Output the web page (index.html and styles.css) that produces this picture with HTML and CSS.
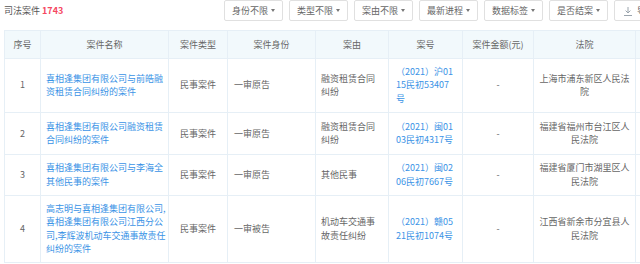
FILE: index.html
```html
<!DOCTYPE html>
<html lang="zh-CN">
<head>
    <meta charset="UTF-8">
    <meta name="viewport" content="width=device-width, initial-scale=1.0">
    <title>司法案件</title>
    <link rel="stylesheet" href="styles.css">
</head>
<body>
    <div class="page">
        <div class="toolbar">
            <div class="title">司法案件 <span class="count">1743</span></div>
            <div class="filters">
                <button class="filter">身份不限<i class="caret"></i></button>
                <button class="filter">类型不限<i class="caret"></i></button>
                <button class="filter">案由不限<i class="caret"></i></button>
                <button class="filter">最新进程<i class="caret"></i></button>
                <button class="filter">数据标签<i class="caret"></i></button>
                <button class="filter">是否结案<i class="caret"></i></button>
                <button class="filter export">
                    <svg width="10" height="10" viewBox="0 0 10 10">
                        <path d="M5 1V7M2.6 4.6L5 7L7.4 4.6M1 9.5H9" fill="none" stroke="#9aa4ad" stroke-width="1"/>
                    </svg>
                    导出
                </button>
            </div>
        </div>

        <table class="case-table">
            <colgroup>
                <col style="width:36px">
                <col style="width:128px">
                <col style="width:59px">
                <col style="width:88px">
                <col style="width:73px">
                <col style="width:74px">
                <col style="width:71px">
                <col style="width:102px">
                <col style="width:80px">
            </colgroup>
            <thead>
                <tr>
                    <th>序号</th>
                    <th>案件名称</th>
                    <th>案件类型</th>
                    <th>案件身份</th>
                    <th>案由</th>
                    <th>案号</th>
                    <th>案件金额(元)</th>
                    <th>法院</th>
                    <th></th>
                </tr>
            </thead>
            <tbody>
                <tr>
                    <td class="center">1</td>
                    <td class="name"><a href="#">喜相逢集团有限公司与前皓融资租赁合同纠纷的案件</a></td>
                    <td class="center">民事案件</td>
                    <td>一审原告</td>
                    <td class="reason">融资租赁合同纠纷</td>
                    <td class="case-no"><a href="#">（2021）沪0115民初53407号</a></td>
                    <td class="center">-</td>
                    <td class="court">上海市浦东新区人民法院</td>
                    <td></td>
                </tr>
                <tr class="tall">
                    <td class="center">2</td>
                    <td class="name"><a href="#">喜相逢集团有限公司融资租赁合同纠纷的案件</a></td>
                    <td class="center">民事案件</td>
                    <td>一审原告</td>
                    <td class="reason">融资租赁合同纠纷</td>
                    <td class="case-no"><a href="#">（2021）闽0103民初4317号</a></td>
                    <td class="center">-</td>
                    <td class="court">福建省福州市台江区人民法院</td>
                    <td></td>
                </tr>
                <tr>
                    <td class="center">3</td>
                    <td class="name"><a href="#">喜相逢集团有限公司与李海全其他民事的案件</a></td>
                    <td class="center">民事案件</td>
                    <td>一审原告</td>
                    <td class="reason">其他民事</td>
                    <td class="case-no"><a href="#">（2021）闽0206民初7667号</a></td>
                    <td class="center">-</td>
                    <td class="court">福建省厦门市湖里区人民法院</td>
                    <td></td>
                </tr>
                <tr>
                    <td class="center">4</td>
                    <td class="name"><a href="#">高志明与喜相逢集团有限公司,喜相逢集团有限公司江西分公司,李辉波机动车交通事故责任纠纷的案件</a></td>
                    <td class="center">民事案件</td>
                    <td>一审被告</td>
                    <td class="reason">机动车交通事故责任纠纷</td>
                    <td class="case-no"><a href="#">（2021）赣0521民初1074号</a></td>
                    <td class="center">-</td>
                    <td class="court">江西省新余市分宜县人民法院</td>
                    <td></td>
                </tr>
            </tbody>
        </table>
    </div>
</body>
</html>
```

FILE: styles.css
```css
html, body {
    margin: 0;
    padding: 0;
    overflow: hidden;
}
body {
    font-family: "Noto Sans CJK SC", "Noto Sans", sans-serif;
    font-size: 9px;
    color: #666;
    background-color: #fff;
}
.page {
    width: 720px;
    padding-left: 4px;
}
.toolbar {
    display: flex;
    align-items: center;
    height: 21px;
}
.title {
    width: 220px;
    color: #555;
}
.count {
    color: #f5485f;
    font-weight: bold;
}
.filters {
    display: flex;
    gap: 6px;
}
.filter {
    width: 59px;
    height: 21px;
    padding: 0;
    border: 1px solid #e0e0e0;
    border-radius: 2px;
    background-color: #fff;
    font: inherit;
    color: #666;
    display: flex;
    align-items: center;
    justify-content: center;
    cursor: pointer;
}
.caret {
    display: inline-block;
    margin-left: 3px;
    border-left: 2.5px solid transparent;
    border-right: 2.5px solid transparent;
    border-top: 3px solid #777;
}
.filter.export {
    width: 50px;
    gap: 4px;
}
.case-table {
    margin-top: 9px;
    width: 711px;
    border-collapse: collapse;
    table-layout: fixed;
}
.case-table th,
.case-table td {
    border: 1px solid #e6eff6;
    line-height: 13.5px;
    vertical-align: middle;
}
.case-table th {
    background-color: #f2f9fc;
    font-weight: normal;
    color: #666;
    padding: 6.5px 2px;
    text-align: center;
    white-space: nowrap;
}
.case-table td {
    padding: 6.25px 6px;
    text-align: left;
}
.case-table tr.tall td {
    padding-top: 7.25px;
    padding-bottom: 7.25px;
}
.case-table a {
    color: #3a93e6;
    text-decoration: none;
}
.case-table td.center {
    text-align: center;
}
.case-table td.name {
    padding-left: 5px;
    padding-right: 1px;
}
.case-table td.reason {
    padding-left: 5px;
    padding-right: 6px;
}
.case-table td.case-no {
    padding-left: 7px;
    padding-right: 7px;
    word-break: break-all;
}
.case-table td.court {
    padding-left: 4px;
    padding-right: 4px;
    text-align: center;
}
```
